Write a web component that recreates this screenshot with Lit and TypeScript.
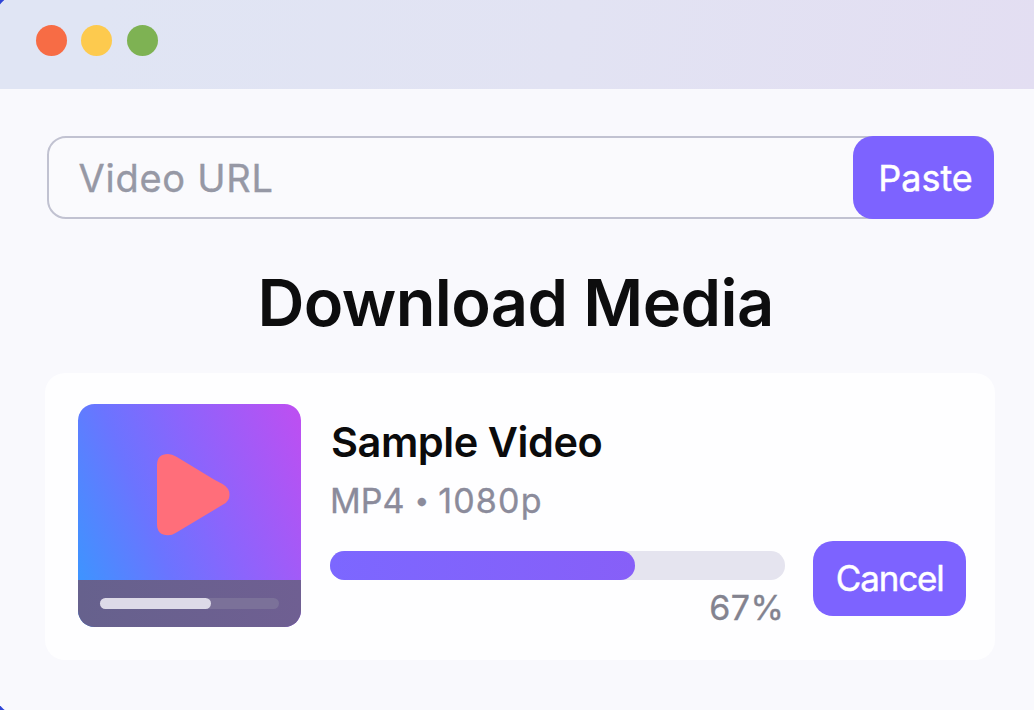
import { LitElement, html, css } from "lit";
import { customElement, property } from "lit/decorators.js";

@customElement("media-thumbnail")
class MediaThumbnail extends LitElement {
  static styles = css`
    :host {
      display: flex;
      flex-direction: column;
      box-sizing: border-box;
      width: 222.5px;
      height: 222.5px;
      border-radius: 16.5px;
      overflow: hidden;
      background: linear-gradient(68deg, #3f93ff 7%, #6b74ff 36%, #8c64fc 60%, #bb50f2 97%);
    }
    .stage {
      height: 176px;
      flex: none;
    }
    .stage svg {
      display: block;
      width: 222.5px;
      height: 176px;
    }
    .controls {
      flex: 1;
      display: flex;
      align-items: center;
      padding: 1px 21.5px 0 22px;
      background: linear-gradient(90deg, #66618d, #6f5f92);
    }
    .track {
      flex: 1;
      height: 11px;
      border-radius: 6px;
      background: #7b7199;
    }
    .played {
      width: 111px;
      height: 11px;
      border-radius: 6px;
      background: #dddae8;
    }
  `;

  render() {
    return html`
      <div class="stage">
        <svg viewBox="0 0 222.5 176">
          <path
            d="M79 61 Q79 50 90 50 Q94 50 98.500 52.800 L136 75.500 L144.500 80 Q151.500 84 151.500 90.700 Q151.500 97 145.500 100.300 L98 128.800 Q94 131.300 90 131.300 Q79 131.300 79 120 Z"
            fill="#ff6e7a"
          />
        </svg>
      </div>
      <div class="controls">
        <div class="track"><div class="played"></div></div>
      </div>
    `;
  }
}

@customElement("download-card")
class DownloadCard extends LitElement {
  @property() name = "";
  @property() format = "";
  @property() quality = "";
  @property({ type: Number }) percent = 0;

  static styles = css`
    :host {
      display: flex;
      box-sizing: border-box;
      height: 287.5px;
      padding: 31.5px 29px 0 33.5px;
      border-radius: 20px;
      background: #fefeff;
    }
    .info {
      width: 454.5px;
      margin-left: 29.5px;
      padding-top: 13px;
    }
    .name {
      padding-left: 1px;
      font-size: 41.5px;
      font-weight: 600;
      line-height: 51px;
      letter-spacing: -0.45px;
      color: #0b0b0c;
      white-space: nowrap;
    }
    .details {
      margin-top: 8px;
      font-size: 34px;
      font-weight: 400;
      line-height: 50px;
      color: #8b8b9b;
      -webkit-text-stroke: 0.35px #8b8b9b;
      white-space: nowrap;
    }
    .separator {
      display: inline-block;
      height: 50px;
      vertical-align: top;
      margin: 0 -0.5px 0 0.5px;
      font-size: 26px;
      line-height: 49px;
    }
    .quality {
      letter-spacing: 1.2px;
    }
    .bar {
      margin-top: 25px;
      height: 28.5px;
      border-radius: 14.25px;
      background: #e5e4ef;
    }
    .fill {
      height: 100%;
      border-radius: 14.25px;
      background: linear-gradient(90deg, #7c67ff, #875ff8);
    }
    .percent {
      margin-top: 8px;
      font-size: 34px;
      font-weight: 400;
      line-height: 40px;
      letter-spacing: 0.5px;
      text-align: right;
      color: #83838f;
      -webkit-text-stroke: 0.35px #83838f;
    }
    .cancel {
      width: 153.5px;
      height: 75px;
      margin: 137px 0 0 28px;
      padding: 0 0 0 1px;
      border: 0;
      border-radius: 20px;
      background: #7d63ff;
      color: #fff;
      font: 400 35px/75px Inter, sans-serif;
      -webkit-text-stroke: 0.45px #fff;
      letter-spacing: -1.15px;
      text-align: center;
    }
  `;

  render() {
    return html`
      <media-thumbnail></media-thumbnail>
      <div class="info">
        <div class="name">${this.name}</div>
        <div class="details">${this.format} <span class="separator">•</span> <span class="quality">${this.quality}</span></div>
        <div class="bar"><div class="fill" style="width:${this.percent}%"></div></div>
        <div class="percent">${this.percent}%</div>
      </div>
      <button class="cancel">Cancel</button>
    `;
  }
}

@customElement("app-root")
class AppRoot extends LitElement {
  static styles = css`
    :host {
      display: block;
      width: 1034px;
      height: 710px;
      overflow: hidden;
      background: #2f45d6;
      font-family: Inter, sans-serif;
    }
    .window {
      display: flow-root;
      height: 722px;
      margin: -6px -6px -6px -6px;
      border-radius: 28px 0 0 28px;
      overflow: hidden;
      background: #f9f9fd;
    }
    .titlebar {
      display: flex;
      align-items: center;
      gap: 14.5px;
      box-sizing: border-box;
      height: 95px;
      padding: 0 0 2px 41.5px;
      background: linear-gradient(100deg, #e0e5f4 10%, #e2e3f3 55%, #e3def2);
    }
    .dot {
      width: 31px;
      height: 31px;
      border-radius: 50%;
    }
    .close { background: #f76c45; }
    .minimize { background: #fdca4e; }
    .zoom { background: #7eb253; }
    .content {
      padding: 47px 45px 0 50.5px;
    }
    .url {
      display: flex;
      justify-content: space-between;
      box-sizing: border-box;
      height: 83px;
      margin: 0 1px 0 2px;
      border: 2.5px solid #c1c2d1;
      border-radius: 19px;
      background: #fafafd;
    }
    .placeholder {
      padding-left: 30px;
      font-size: 38px;
      font-weight: 400;
      line-height: 80px;
      letter-spacing: 0.75px;
      color: #9698a5;
      -webkit-text-stroke: 0.35px #9698a5;
    }
    .paste {
      width: 141px;
      height: 83px;
      margin: -2px;
      padding: 0 0 0 4px;
      border: 0;
      border-radius: 20px;
      background: #7d63ff;
      color: #fff;
      font: 400 36px/82px Inter, sans-serif;
      -webkit-text-stroke: 0.45px #fff;
      text-align: center;
    }
    h1 {
      margin: 44px 0 29.5px;
      padding-right: 8.5px;
      font-size: 65px;
      font-weight: 600;
      line-height: 80px;
      letter-spacing: -0.6px;
      text-align: center;
      color: #0d0d0e;
    }
  `;

  render() {
    return html`
      <div class="window">
        <div class="titlebar">
          <div class="dot close"></div>
          <div class="dot minimize"></div>
          <div class="dot zoom"></div>
        </div>
        <div class="content">
          <div class="url">
            <div class="placeholder">Video URL</div>
            <button class="paste">Paste</button>
          </div>
          <h1>Download Media</h1>
          <download-card name="Sample Video" format="MP4" quality="1080p" percent="67"></download-card>
        </div>
      </div>
    `;
  }
}
